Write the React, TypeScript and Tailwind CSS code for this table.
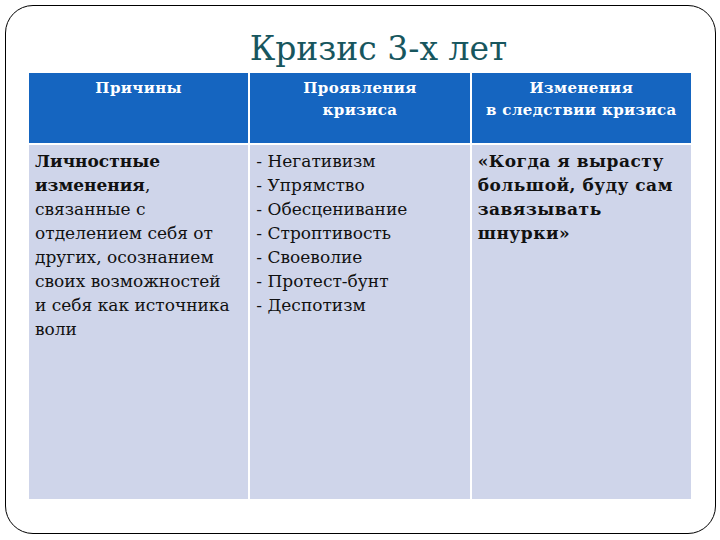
export default function App() {
  const head = ["Причины", "Проявления\nкризиса", "Изменения\nв следствии кризиса"];
  const symptoms = [
    "Негативизм",
    "Упрямство",
    "Обесценивание",
    "Строптивость",
    "Своеволие",
    "Протест-бунт",
    "Деспотизм",
  ];

  return (
    <div className="w-[720px] h-[540px] bg-white pt-[5px] pl-[5px] pr-[4px] pb-[6px] font-['DejaVu_Serif',serif]">
      <div className="h-full border border-black rounded-[28px]">
        <div className="h-[67px] flex items-end justify-center pl-[36px] pb-[8px]">
          <h1 className="text-[33px] leading-none text-[#17565e]">Кризис 3-х лет</h1>
        </div>

        <div className="ml-[23px] w-[662px]">
          {/* header */}
          <div className="grid grid-cols-3 gap-x-[2px] bg-white">
            {head.map((h) => (
              <div
                key={h}
                className="h-[70px] bg-[#1565c0] text-white font-bold text-[15px] tracking-[0.4px] leading-[22px] text-center pt-[4px] whitespace-pre-line"
              >
                {h}
              </div>
            ))}
          </div>

          {/* body */}
          <div className="grid grid-cols-3 gap-x-[2px] mt-[2px] text-[17px] leading-[24px] text-[#111]">
            <div className="h-[354px] bg-[#cfd5ea] pl-[6px] pr-[2px] pt-[4px] whitespace-nowrap">
              <b>Личностные</b>
              <br />
              <b>изменения</b>,
              <br />
              связанные с
              <br />
              отделением себя от
              <br />
              других, осознанием
              <br />
              своих возможностей
              <br />
              и себя как источника
              <br />
              воли
            </div>
            <div className="h-[354px] bg-[#cfd5ea] pl-[6px] pr-[2px] pt-[4px]">
              {symptoms.map((s) => (
                <div key={s}>- {s}</div>
              ))}
            </div>
            <div className="h-[354px] bg-[#cfd5ea] pl-[6px] pr-[2px] pt-[4px] font-bold tracking-[0.5px] whitespace-nowrap">
              «Когда я вырасту
              <br />
              большой, буду сам
              <br />
              завязывать
              <br />
              шнурки»
            </div>
          </div>
        </div>
      </div>
    </div>
  );
}
